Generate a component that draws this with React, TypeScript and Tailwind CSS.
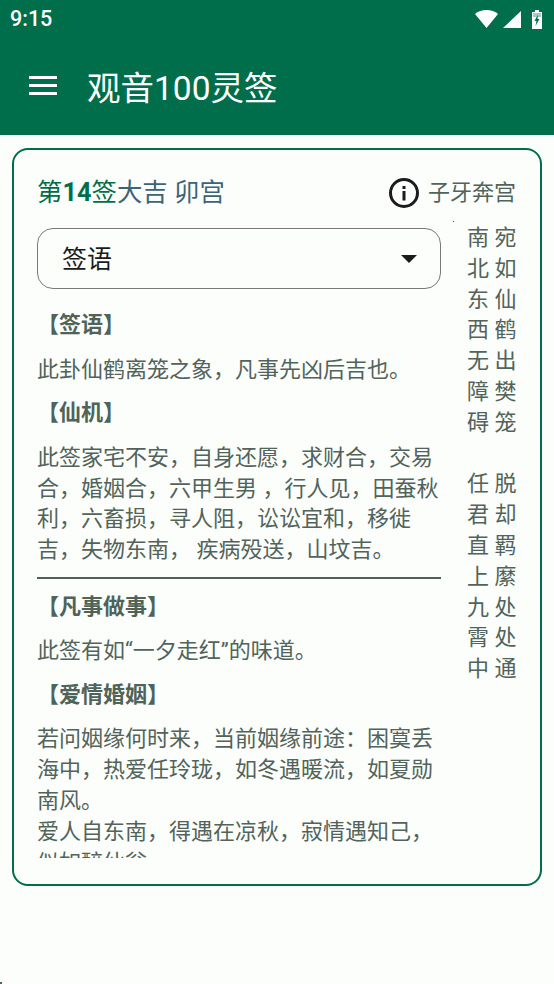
import React from "react";

const font = "font-['Roboto','Noto_Sans_CJK_SC',sans-serif]";

const poem = [
  "南 宛",
  "北 如",
  "东 仙",
  "西 鹤",
  "无 出",
  "障 樊",
  "碍 笼",
  "",
  "任 脱",
  "君 却",
  "直 羁",
  "上 縻",
  "九 处",
  "霄 处",
  "中 通",
];

function Heading({ children }: { children: React.ReactNode }) {
  return <div className="text-[22px] leading-[30.8px] font-bold text-[#4f6359] mb-[14px]">{children}</div>;
}

function Para({ lines }: { lines: string[] }) {
  return (
    <div className="text-[22px] leading-[30.8px] text-[#52635b] mb-[12.500px]">
      {lines.map((l) => (
        <div key={l} className="whitespace-nowrap">
          {l}
        </div>
      ))}
    </div>
  );
}

export default function App() {
  return (
    <div className={`${font} relative w-[554px] h-[984px] overflow-hidden bg-[#fbfefa]`}>
      {/* status + app bar */}
      <div className="h-[135px] bg-[#006e4a] text-white">
        <div className="h-[38px] flex items-center justify-between pl-[10px] pr-[12px]">
          <span className="text-[21.500px] font-medium">9:15</span>
          <div className="flex items-center">
            <svg width="23" height="18" viewBox="0 0 23 18" fill="white">
              <path d="M0 4C3 1.500 7 0 11.500 0S20 1.500 23 4L11.500 18z" />
            </svg>
            <svg width="18" height="17" viewBox="0 0 18 17" fill="white" className="ml-[5px]">
              <path d="M18 0v17H0z" />
            </svg>
            <svg width="10" height="19" viewBox="0 0 10 19" fill="white" className="ml-[11px]">
              <path d="M3 0h4v2h2.500a.5.5 0 0 1 .5.500v16a.5.5 0 0 1-.5.500H.5a.5.5 0 0 1-.5-.500v-16A.5.5 0 0 1 .5 2H3z" />
              <path d="M6 4.500 2.500 11h2l-1 5L7.500 9h-2z" fill="#006e4a" />
              <path d="M1 3h8v4H1z" fill="#006e4a" opacity="0.35" />
            </svg>
          </div>
        </div>
        <div className="h-[97px] flex items-center">
          <div className="ml-[29px] -mt-[2px] w-[28px] flex flex-col gap-[5px]">
            <div className="h-[3px] bg-white" />
            <div className="h-[3px] bg-white" />
            <div className="h-[3px] bg-white" />
          </div>
          <span className="ml-[30px] mt-[4px] text-[33.500px] leading-none">观音100灵签</span>
        </div>
      </div>

      {/* card */}
      <div className="mx-[12px] mt-[13px] h-[738px] border-2 border-[#006e4a] rounded-[16px] pl-[23px] pr-[24px] pt-[24px] overflow-hidden">
        <div className="flex items-center justify-between h-[38px]">
          <div className="text-[25.400px] leading-none text-[#3c6478]">
            <span className="text-[#006e4a]">
              第<b className="font-bold">14</b>签
            </span>
            大吉 卯宫
          </div>
          <div className="flex items-center gap-[8px]">
            <svg width="32" height="32" viewBox="0 0 32 32" fill="none">
              <circle cx="16" cy="16" r="13.500" stroke="#1c1b1f" strokeWidth="3" />
              <rect x="14.500" y="14" width="3" height="9.500" fill="#1c1b1f" />
              <rect x="14.500" y="9" width="3" height="3" fill="#1c1b1f" />
            </svg>
            <span className="text-[22px] leading-none text-[#52635b]">子牙奔宫</span>
          </div>
        </div>

        <div className="flex mt-[16px]">
          <div className="w-[404px] shrink-0">
            <div className="h-[61px] border-[1.500px] border-[#74797a] rounded-[16px] flex items-center justify-between pl-[24px] pr-[23px]">
              <span className="text-[25px] mt-[3px] text-[#191c1b]">签语</span>
              <div className="mt-[1px] w-0 h-0 border-x-[8px] border-x-transparent border-t-[8px] border-t-[#191c1b]" />
            </div>

            <div className="h-[569px] overflow-hidden pt-[21px]">
              <Heading>【签语】</Heading>
              <Para lines={["此卦仙鹤离笼之象，凡事先凶后吉也。"]} />
              <Heading>【仙机】</Heading>
              <Para
                lines={[
                  "此签家宅不安，自身还愿，求财合，交易",
                  "合，婚姻合，六甲生男 ，行人见，田蚕秋",
                  "利，六畜损，寻人阻，讼讼宜和，移徙",
                  "吉，失物东南， 疾病殁送，山坟吉。",
                ]}
              />
              <div className="h-[2px] bg-[#4f6158] -mt-[2px] mb-[13px]" />
              <Heading>【凡事做事】</Heading>
              <Para lines={["此签有如“一夕走红”的味道。"]} />
              <Heading>【爱情婚姻】</Heading>
              <Para
                lines={[
                  "若问姻缘何时来，当前姻缘前途：困寞丢",
                  "海中，热爱任玲珑，如冬遇暖流，如夏勋",
                  "南风。",
                  "爱人自东南，得遇在凉秋，寂情遇知己，",
                  "似如醉仙翁",
                ]}
              />
            </div>
          </div>

          <div className="ml-[26px] -mt-[5px] text-[22px] leading-[30.800px] text-[#52635b]">
            {poem.map((row, i) => (
              <div key={i} className="h-[30.800px] whitespace-pre">
                {row}
              </div>
            ))}
          </div>
        </div>
      </div>

      <div className="absolute left-[453px] top-[221px] w-[1px] h-[1px] bg-[#52635b]" />
      <div className="absolute left-0 top-[982px] w-[2px] h-[2px] bg-[#52635b]" />
    </div>
  );
}
